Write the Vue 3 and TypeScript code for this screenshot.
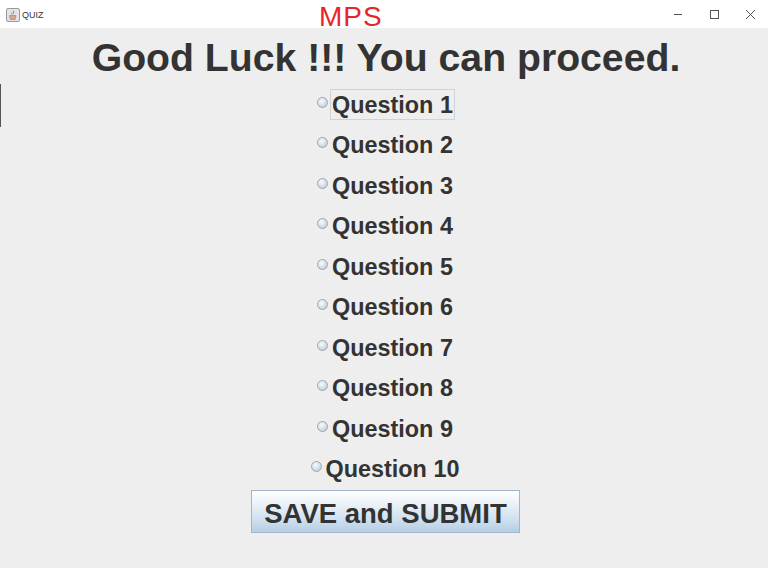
<script setup lang="ts">
const questions: string[] = Array.from({ length: 10 }, (_, i) => `Question ${i + 1}`);
</script>

<template>
  <div class="window">
    <header class="titlebar">
      <div class="app">
        <svg class="app-icon" width="14" height="14" viewBox="0 0 14 14">
          <rect x="0.5" y="0.5" width="13" height="13" rx="1.500" fill="#e4e4e6" stroke="#9a9aa2" />
          <path d="M7 2.500c1.600 1 .2 2 .4 3.200M5.200 4.500c.6.8 1 1 .8 2" fill="none" stroke="#c9663f" stroke-width="1" />
          <path d="M3.500 7.500h6.500l-.8 4H4.300z" fill="#d8a48f" stroke="#a8786a" stroke-width="0.6" />
        </svg>
        <span class="app-title">QUIZ</span>
      </div>
      <span class="scribble">MPS</span>
      <div class="controls">
        <svg class="control" width="36" height="28" viewBox="0 0 36 28"><path d="M14 15.500h8" stroke="#555" fill="none" /></svg>
        <svg class="control" width="36" height="28" viewBox="0 0 36 28"><rect x="14.500" y="11.500" width="8" height="8" stroke="#555" fill="none" /></svg>
        <svg class="control" width="36" height="28" viewBox="0 0 36 28"><path d="M14 11l9 9M23 11l-9 9" stroke="#555" fill="none" /></svg>
      </div>
    </header>

    <span class="edge-line"></span>

    <main class="content">
      <h1 class="heading">Good Luck !!! You can proceed.</h1>
      <div class="options">
        <label v-for="(q, i) in questions" :key="q" class="option">
          <span class="radio"></span>
          <span class="label" :class="{ focused: i === 0 }">{{ q }}</span>
        </label>
      </div>
      <button class="submit" type="button">SAVE and SUBMIT</button>
    </main>
  </div>
</template>

<style>
html, body { margin: 0; padding: 0; background: #eeeeee; }
</style>

<style scoped>
.window {
  position: relative;
  width: 768px;
  height: 568px;
  overflow: hidden;
  background: #eeeeee;
  font-family: "Liberation Sans", Arial, sans-serif;
  color: #333333;
}
.titlebar {
  position: relative;
  display: flex;
  align-items: center;
  justify-content: space-between;
  height: 28px;
  background: #ffffff;
}
.app {
  display: flex;
  align-items: center;
  gap: 2px;
  padding-left: 6px;
  margin-top: 2px;
}
.app-title {
  font-size: 9px;
  color: #333;
}
.app-icon { display: block; }
.scribble {
  position: absolute;
  left: 319px;
  top: 0;
  font-family: "Liberation Sans", Arial, sans-serif;
  font-size: 28px;
  font-weight: 400;
  line-height: 33px;
  color: #e8262a;
  letter-spacing: 1px;
}
.controls { display: flex; align-items: center; margin-top: -2px; }
.control { display: block; }
.edge-line {
  position: absolute;
  left: 0;
  top: 84px;
  width: 1px;
  height: 43px;
  background: #555;
}
.content {
  display: flex;
  flex-direction: column;
  align-items: center;
  padding-left: 4px;
}
.heading {
  margin: 0;
  height: 56px;
  font-size: 39.200px;
  line-height: 60px;
  font-weight: 700;
  white-space: nowrap;
}
.options { display: flex; flex-direction: column; align-items: center; }
.option {
  display: flex;
  align-items: center;
  height: 40.500px;
}
.radio {
  width: 11px;
  height: 11px;
  box-sizing: border-box;
  border-radius: 50%;
  margin-top: -4px;
  margin-right: 2px;
  border: 1px solid #9fa6ad;
  background: radial-gradient(circle at 40% 35%, #f8fbfd, #c4d3de 75%);
}
.label {
  box-sizing: border-box;
  height: 31px;
  padding: 0 1px;
  border: 1px solid transparent;
  font-size: 23.400px;
  font-weight: 700;
  line-height: 31px;
  white-space: nowrap;
}
.focused { border-color: #cfd2d6; }
.submit {
  width: 269px;
  height: 43px;
  margin: 1px 0 0 -1px;
  padding: 4px 0 0;
  border: 1px solid #a3b5c8;
  background: linear-gradient(#ffffff, #e8f0f7 35%, #cfe0ef 70%, #b5cee3);
  font-family: inherit;
  font-size: 27.500px;
  font-weight: 700;
  color: #333;
  white-space: nowrap;
}
</style>
